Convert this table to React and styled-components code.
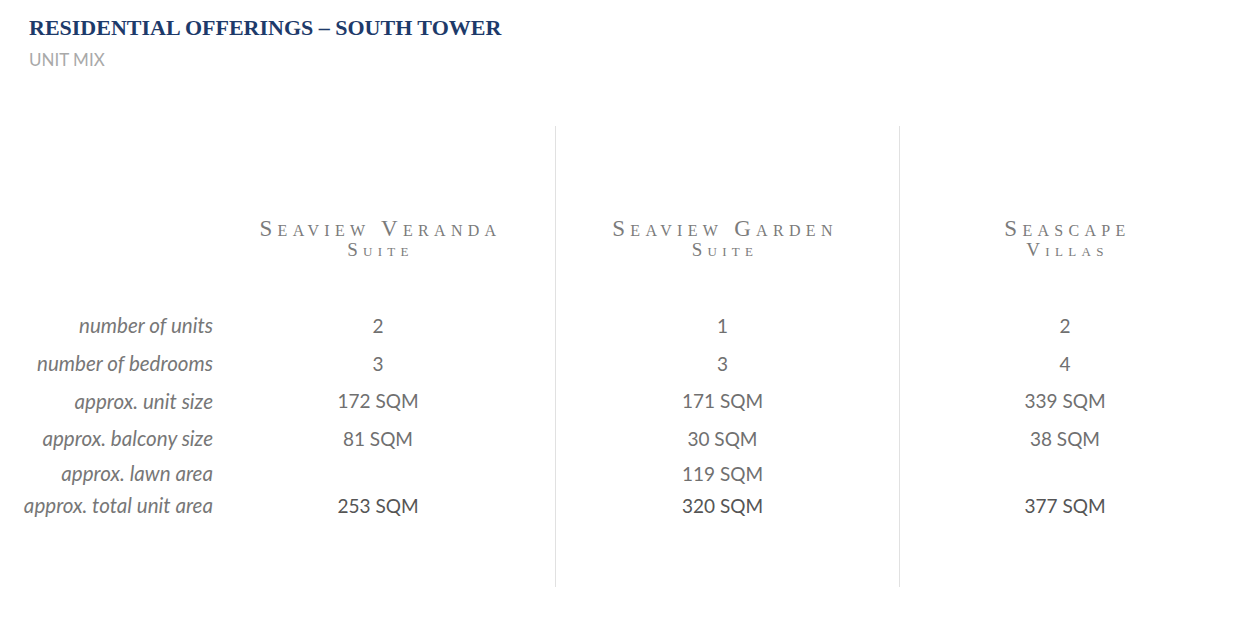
import React from 'react';
import styled, { createGlobalStyle } from 'styled-components';

const GlobalStyle = createGlobalStyle`
  html, body {
    margin: 0;
    padding: 0;
    background: #ffffff;
  }
`;

const Page = styled.div`
  width: 1240px;
  height: 619px;
  overflow: hidden;
  background: #ffffff;
`;

const Header = styled.header`
  padding: 14px 0 0 29px;
`;

const Title = styled.h1`
  margin: 0;
  font-family: 'Liberation Serif', serif;
  font-weight: 700;
  font-size: 22px;
  line-height: 28px;
  color: #1d3a6a;
  letter-spacing: 0;
`;

const Subtitle = styled.div`
  margin-top: 8px;
  font-family: 'Lato', sans-serif;
  font-size: 17px;
  line-height: 20px;
  color: #a9a9a9;
`;

const Table = styled.div`
  display: flex;
  margin-top: 56px;
  height: 461px;
`;

const LabelColumn = styled.div`
  width: 213px;
  padding-top: 180px;
  display: flex;
  flex-direction: column;
  align-items: flex-end;
`;

const Column = styled.div`
  width: ${({ width }) => width}px;
  box-sizing: border-box;
  padding-right: ${({ shift }) => shift}px;
  border-left: ${({ divider }) => (divider ? '1px solid #e1e1e1' : 'none')};
  display: flex;
  flex-direction: column;
  align-items: center;
`;

const ColumnTitle = styled.div`
  height: 180px;
  padding: 92px 0 0 5px;
  box-sizing: border-box;
  text-align: center;
  font-family: 'Liberation Serif', serif;
  font-variant: small-caps;
  color: #7b7b7b;
  letter-spacing: 5.3px;
`;

const TitleLine = styled.div`
  font-size: ${({ size }) => size}px;
  line-height: ${({ lh }) => lh}px;
`;

const Cell = styled.div`
  height: ${({ h }) => h}px;
  display: flex;
  align-items: center;
  font-family: 'Lato', sans-serif;
  font-size: 19px;
  white-space: nowrap;
  color: ${({ strong }) => (strong ? '#555555' : '#707070')};
`;

const Label = styled(Cell)`
  font-style: italic;
  font-size: 20.6px;
  color: #777777;
`;

const rowHeights = [38, 38, 37, 38, 32, 32];

const labels = [
  'number of units',
  'number of bedrooms',
  'approx. unit size',
  'approx. balcony size',
  'approx. lawn area',
  'approx. total unit area',
];

const suites = [
  {
    name: 'Seaview Veranda',
    kind: 'Suite',
    width: 342,
    shift: 12,
    values: ['2', '3', '172 SQM', '81 SQM', '', '253 SQM'],
  },
  {
    name: 'Seaview Garden',
    kind: 'Suite',
    width: 344,
    shift: 10,
    values: ['1', '3', '171 SQM', '30 SQM', '119 SQM', '320 SQM'],
  },
  {
    name: 'Seascape',
    kind: 'Villas',
    width: 341,
    shift: 10,
    values: ['2', '4', '339 SQM', '38 SQM', '', '377 SQM'],
  },
];

export default function App() {
  return (
    <Page>
      <GlobalStyle />
      <Header>
        <Title>RESIDENTIAL OFFERINGS – SOUTH TOWER</Title>
        <Subtitle>UNIT MIX</Subtitle>
      </Header>
      <Table>
        <LabelColumn>
          {labels.map((label, i) => (
            <Label key={label} h={rowHeights[i]}>
              {label}
            </Label>
          ))}
        </LabelColumn>
        {suites.map((suite, idx) => (
          <Column
            key={suite.name}
            width={suite.width}
            shift={suite.shift}
            divider={idx > 0}
          >
            <ColumnTitle>
              <TitleLine size={23} lh={22}>
                {suite.name}
              </TitleLine>
              <TitleLine size={19} lh={19}>
                {suite.kind}
              </TitleLine>
            </ColumnTitle>
            {suite.values.map((v, i) => (
              <Cell key={i} h={rowHeights[i]} strong={i === 5}>
                {v}
              </Cell>
            ))}
          </Column>
        ))}
      </Table>
    </Page>
  );
}
